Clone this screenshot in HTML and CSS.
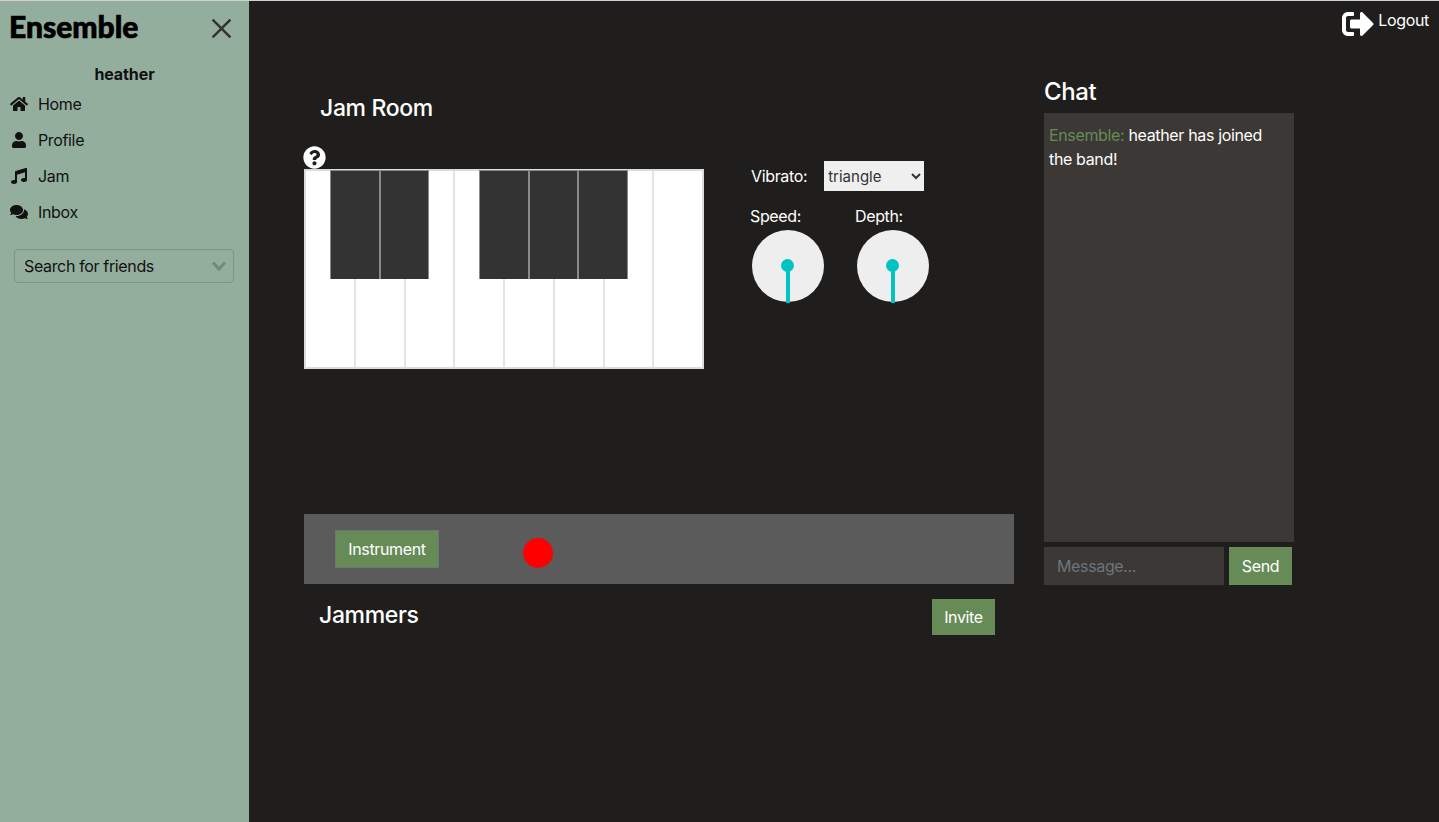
FILE: index.html
```html
<!DOCTYPE html>
<html lang="en">
<head>
    <meta charset="UTF-8">
    <meta name="viewport" content="width=device-width, initial-scale=1.0">
    <title>Ensemble</title>
    <link rel="stylesheet" href="styles.css">
</head>
<body>
    <aside class="sidebar">
        <div class="brand">
            <span class="logo">Ensemble</span>
            <svg class="close-icon" viewBox="0 0 20 20"><path d="M1.5 1.5l17 17M18.5 1.5l-17 17"/></svg>
        </div>
        <div class="username">heather</div>
        <nav class="nav">
            <a class="nav-item" href="#">
                <svg class="nav-icon" viewBox="0 0 576 512"><path d="M280.37 148.26L96 300.11V464a16 16 0 0 0 16 16l112.06-.29a16 16 0 0 0 15.92-16V368a16 16 0 0 1 16-16h64a16 16 0 0 1 16 16v95.64a16 16 0 0 0 16 16.05L464 480a16 16 0 0 0 16-16V300L295.67 148.26a12.19 12.19 0 0 0-15.3 0zM571.6 251.47L488 182.56V44.05a12 12 0 0 0-12-12h-56a12 12 0 0 0-12 12v72.61L318.47 43a48 48 0 0 0-61 0L4.34 251.47a12 12 0 0 0-1.6 16.9l25.5 31A12 12 0 0 0 45.15 301l235.22-193.74a12.19 12.19 0 0 1 15.3 0L530.9 301a12 12 0 0 0 16.9-1.6l25.5-31a12 12 0 0 0-1.7-16.93z"/></svg>
                Home
            </a>
            <a class="nav-item" href="#">
                <svg class="nav-icon" viewBox="0 0 448 512"><path d="M224 256c70.7 0 128-57.3 128-128S294.7 0 224 0 96 57.3 96 128s57.3 128 128 128zm89.6 32h-16.7c-22.2 10.2-46.9 16-72.9 16s-50.6-5.8-72.9-16h-16.7C60.2 288 0 348.2 0 422.4V464c0 26.5 21.5 48 48 48h352c26.5 0 48-21.5 48-48v-41.6c0-74.2-60.2-134.4-134.4-134.4z"/></svg>
                Profile
            </a>
            <a class="nav-item" href="#">
                <svg class="nav-icon" viewBox="0 0 512 512"><path d="M470.38 1.51L150.41 96A32 32 0 0 0 128 126.51v261.41A139 139 0 0 0 96 384c-53 0-96 28.66-96 64s43 64 96 64 96-28.66 96-64V214.32l256-75v184.61a138.4 138.4 0 0 0-32-3.93c-53 0-96 28.66-96 64s43 64 96 64 96-28.65 96-64V32a32 32 0 0 0-41.62-30.49z"/></svg>
                Jam
            </a>
            <a class="nav-item" href="#">
                <svg class="nav-icon" viewBox="0 0 576 512"><path d="M416 192c0-88.4-93.1-160-208-160S0 103.6 0 192c0 34.3 14.1 65.9 38 92-13.4 30.2-35.5 54.2-35.8 54.5-2.2 2.3-2.8 5.7-1.5 8.7S4.8 352 8 352c36.6 0 66.9-12.3 88.7-25 32.2 15.7 70.3 25 111.3 25 114.9 0 208-71.6 208-160zm122 220c23.9-26 38-57.7 38-92 0-66.9-53.5-124.2-129.3-148.1.9 6.6 1.3 13.3 1.3 20.1 0 105.9-107.7 192-240 192-10.8 0-21.3-.8-31.7-1.9C207.8 439.6 281.8 480 368 480c41 0 79.1-9.2 111.3-25 21.8 12.7 52.1 25 88.7 25 3.2 0 6.1-1.9 7.3-4.8 1.3-2.9.7-6.3-1.5-8.7-.3-.3-22.4-24.2-35.8-54.5z"/></svg>
                Inbox
            </a>
        </nav>
        <div class="friend-search">
            <span>Search for friends</span>
            <svg class="chevron" viewBox="0 0 16 12"><path d="M2 2.5l6 6.5 6-6.5"/></svg>
        </div>
    </aside>

    <main class="main">
        <header class="topbar">
            <a class="logout" href="#">
                <svg class="logout-icon" viewBox="0 0 512 512"><path d="M497 273L329 441c-15 15-41 4.5-41-17v-96H152c-13.3 0-24-10.7-24-24v-96c0-13.3 10.7-24 24-24h136V88c0-21.4 25.9-32 41-17l168 168c9.3 9.4 9.3 24.6 0 34zM192 436v-40c0-6.6-5.4-12-12-12H96c-17.7 0-32-14.3-32-32V160c0-17.7 14.3-32 32-32h84c6.6 0 12-5.4 12-12V76c0-6.6-5.4-12-12-12H96c-53 0-96 43-96 96v192c0 53 43 96 96 96h84c6.6 0 12-5.4 12-12z"/></svg>
                <span>Logout</span>
            </a>
        </header>

        <div class="content">
            <section class="jam">
                <h2 class="jam-title">Jam Room</h2>
                <div class="instrument-area">
                    <div class="piano-wrap">
                        <svg class="help-icon" viewBox="0 0 512 512"><circle cx="256" cy="256" r="200" fill="#1f1e1c"/><path fill="#fff" d="M504 256c0 136.997-111.043 248-248 248S8 392.997 8 256C8 119.083 119.043 8 256 8s248 111.083 248 248zM262.655 90c-54.497 0-89.255 22.957-116.549 63.758-3.536 5.286-2.353 12.415 2.715 16.258l34.699 26.31c5.205 3.947 12.621 3.008 16.665-2.122 17.864-22.658 30.113-35.797 57.303-35.797 20.429 0 45.698 13.148 45.698 32.958 0 14.976-12.363 22.667-32.534 33.976C247.128 238.528 216 254.941 216 296v4c0 6.627 5.373 12 12 12h56c6.627 0 12-5.373 12-12v-1.333c0-28.462 83.186-29.647 83.186-106.667 0-58.002-60.165-102-116.531-102zM256 338c-25.365 0-46 20.635-46 46 0 25.364 20.635 46 46 46s46-20.636 46-46c0-25.365-20.635-46-46-46z"/></svg>
                        <div class="piano">
                            <div class="white-key"></div>
                            <div class="white-key"></div>
                            <div class="white-key"></div>
                            <div class="white-key"></div>
                            <div class="white-key"></div>
                            <div class="white-key"></div>
                            <div class="white-key"></div>
                            <div class="white-key"></div>
                            <div class="black-keys">
                                <div class="black-group">
                                    <div class="black-key"></div>
                                    <div class="black-key"></div>
                                </div>
                                <div class="black-group">
                                    <div class="black-key"></div>
                                    <div class="black-key"></div>
                                    <div class="black-key"></div>
                                </div>
                            </div>
                        </div>
                    </div>
                    <div class="controls">
                        <div class="vibrato">
                            <label class="control-label">Vibrato:</label>
                            <select class="wave-select">
                                <option>triangle</option>
                                <option>sine</option>
                                <option>square</option>
                                <option>sawtooth</option>
                            </select>
                        </div>
                        <div class="knobs">
                            <div class="knob-box">
                                <div class="control-label">Speed:</div>
                                <div class="knob"><div class="knob-hand"></div></div>
                            </div>
                            <div class="knob-box">
                                <div class="control-label">Depth:</div>
                                <div class="knob"><div class="knob-hand"></div></div>
                            </div>
                        </div>
                    </div>
                </div>
                <div class="record-bar">
                    <button class="btn btn-instrument">Instrument</button>
                    <div class="record-dot"></div>
                </div>
                <div class="jammers">
                    <h2 class="jammers-title">Jammers</h2>
                    <button class="btn btn-invite">Invite</button>
                </div>
            </section>

            <section class="chat">
                <h2 class="chat-title">Chat</h2>
                <div class="chat-log"><span class="chat-bot">Ensemble:</span> heather has joined the band!</div>
                <form class="chat-form">
                    <input class="chat-input" type="text" placeholder="Message...">
                    <button class="btn btn-send" type="button">Send</button>
                </form>
            </section>
        </div>
    </main>
</body>
</html>
```

FILE: styles.css
```css
* {
    box-sizing: border-box;
}

body {
    margin: 0;
    height: 822px;
    display: flex;
    overflow: hidden;
    border-top: 1px solid #cfcfd8;
    background-color: #1f1e1c;
    color: #fff;
    font-family: Inter, "Liberation Sans", sans-serif;
    font-size: 16px;
    letter-spacing: -0.35px;
}

/* sidebar */
.sidebar {
    width: 249px;
    flex-shrink: 0;
    background-color: #94ae9e;
    color: #111;
}

.brand {
    display: flex;
    align-items: center;
    justify-content: space-between;
    height: 50px;
    padding: 0 17px 0 9px;
}

.logo {
    font-family: Lato, sans-serif;
    font-weight: 900;
    font-size: 30px;
    letter-spacing: 0;
    color: #000;
    -webkit-text-stroke: 0.7px #000;
}

.close-icon {
    width: 21px;
    height: 21px;
    margin-top: 4px;
    fill: none;
    stroke: #333;
    stroke-width: 2.4;
}

.username {
    margin-top: 14px;
    text-align: center;
    font-weight: 700;
    letter-spacing: -0.1px;
    line-height: 19px;
}

.nav {
    margin-top: 2px;
}

.nav-item {
    display: flex;
    align-items: center;
    height: 36px;
    padding-left: 10px;
    color: #111;
    text-decoration: none;
}

.nav-icon {
    width: 18px;
    height: 16px;
    margin-right: 10px;
    fill: #111;
}

.friend-search {
    display: flex;
    align-items: center;
    justify-content: space-between;
    height: 34px;
    margin: 19px 15px 0 14px;
    padding: 0 6px 0 9px;
    border: 1px solid #7b9585;
    border-radius: 4px;
}

.chevron {
    width: 16px;
    height: 12px;
    fill: none;
    stroke: #73897b;
    stroke-width: 3;
}

/* main area */
.main {
    flex: 1;
    min-width: 0;
}

.topbar {
    display: flex;
    justify-content: flex-end;
    height: 49px;
    padding: 9px 10px 0 0;
}

.logout {
    display: flex;
    align-items: flex-start;
    height: 30px;
    color: #fff;
    text-decoration: none;
}

.logout-icon {
    width: 32px;
    height: 32px;
    margin: -2px 4px 0 0;
    fill: #fff;
}

.logout span {
    line-height: 20px;
}

.content {
    display: flex;
    gap: 30px;
    padding-left: 55px;
}

.jam {
    width: 710px;
}

.jam-title {
    margin: 44px 0 0 16px;
    font-size: 23px;
    font-weight: 500;
    line-height: 28px;
}

.instrument-area {
    display: flex;
    height: 368px;
    margin-top: 24px;
}

.piano-wrap {
    width: 400px;
}

.help-icon {
    display: block;
    width: 23px;
    height: 23px;
    margin-left: -1px;
}

.piano {
    position: relative;
    display: flex;
    height: 200px;
    border: 2px solid #dcdcdc;
    background: #fff;
}

.white-key {
    flex: 1;
    border-right: 2px solid #e4e4e4;
}

.white-key:nth-child(8) {
    border-right: none;
}

.black-keys {
    position: absolute;
    top: -1px;
    left: 24px;
    display: flex;
    gap: 50px;
}

.black-group {
    display: flex;
}

.black-key {
    width: 49.5px;
    height: 109px;
    background: #333;
    border: 1px solid #8a8a8a;
    border-bottom: none;
}

.controls {
    margin-left: 46px;
    padding-top: 15px;
}

.control-label {
    line-height: 20px;
}

.vibrato {
    display: flex;
    align-items: center;
    height: 30px;
    padding-left: 1px;
}

.wave-select {
    width: 100px;
    height: 30px;
    margin-left: 17px;
    border: none;
    border-radius: 0;
    background-color: #efefef;
    color: #333;
    font-family: Inter, sans-serif;
    font-size: 15px;
}

.knobs {
    display: flex;
    gap: 33px;
    margin-top: 15px;
}

.knob-box {
    width: 72px;
}

.knob {
    position: relative;
    width: 72px;
    height: 72px;
    margin: 4px 0 0 2px;
    border-radius: 50%;
    background: #eee;
}

.knob-hand {
    position: absolute;
    top: 36px;
    left: 33.5px;
    width: 4px;
    height: 37px;
    background: #00c4c4;
}

.knob-hand::before {
    content: "";
    position: absolute;
    top: -7px;
    left: -4.5px;
    width: 13px;
    height: 13px;
    border-radius: 50%;
    background: #00c4c4;
}

.record-bar {
    display: flex;
    align-items: center;
    height: 70px;
    padding: 0 0 0 31px;
    background: #5b5b5b;
}

.btn {
    border: none;
    background: #668b57;
    color: #fff;
    font-family: Inter, sans-serif;
    font-size: 16px;
    letter-spacing: -0.35px;
}

.btn-instrument {
    width: 104px;
    height: 38px;
    border: 1px solid #6c757d;
}

.record-dot {
    width: 30px;
    height: 30px;
    margin: 8px 0 0 84px;
    border-radius: 50%;
    background: #f00;
}

.jammers {
    display: flex;
    justify-content: space-between;
    padding: 15px 19px 0 15px;
}

.jammers-title {
    margin: 0;
    font-size: 23px;
    font-weight: 500;
    line-height: 32px;
}

.btn-invite {
    width: 63px;
    height: 36px;
}

/* chat */
.chat {
    width: 250px;
}

.chat-title {
    margin: 27px 0 0;
    font-size: 24px;
    font-weight: 500;
    line-height: 30px;
}

.chat-log {
    height: 429px;
    margin-top: 6px;
    padding: 10px 5px;
    background: #3c3835;
    line-height: 24px;
}

.chat-bot {
    color: #668b57;
}

.chat-form {
    display: flex;
    gap: 5px;
    margin-top: 5px;
}

.chat-input {
    width: 180px;
    height: 38px;
    padding: 0 13px;
    border: none;
    background: #3c3835;
    color: #fff;
    font-family: Inter, sans-serif;
    font-size: 16px;
    letter-spacing: -0.35px;
}

.chat-input::placeholder {
    color: #6c757d;
}

.btn-send {
    width: 63px;
    height: 38px;
}
```
